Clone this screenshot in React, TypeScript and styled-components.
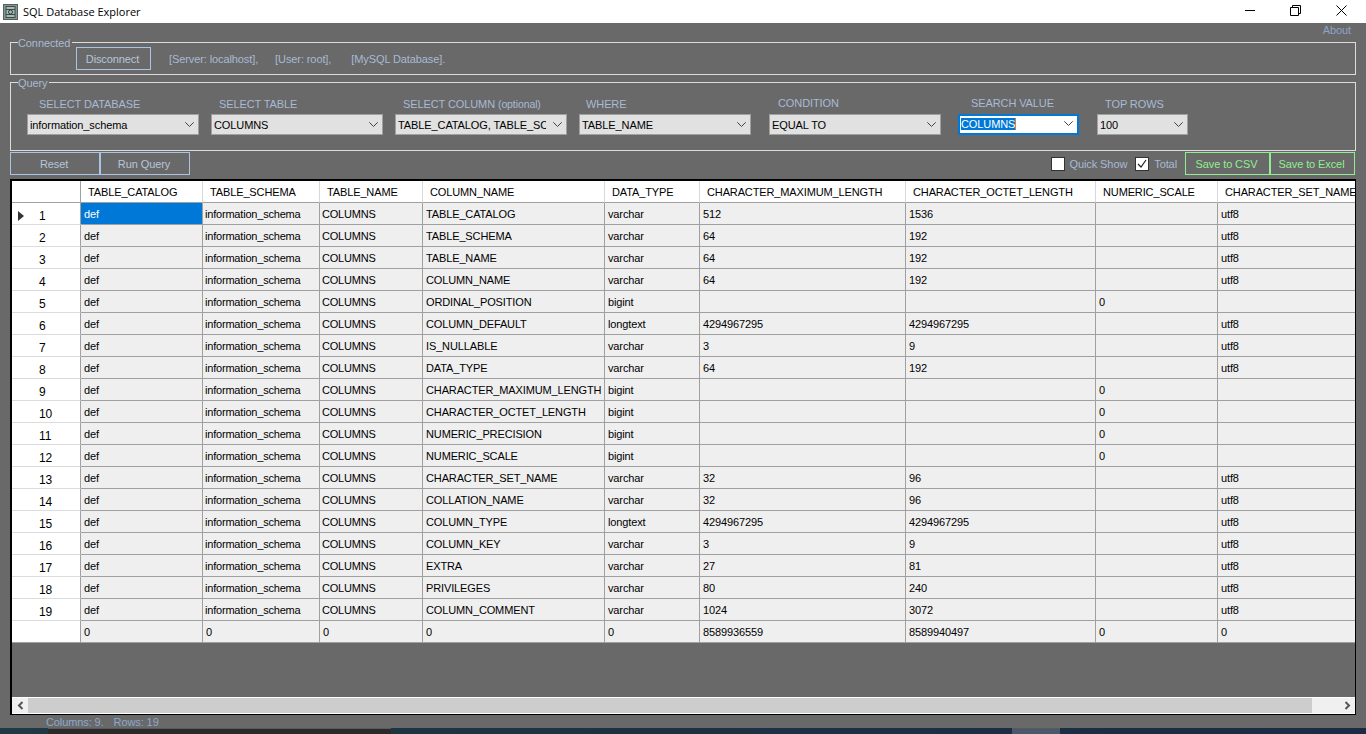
import React from 'react';
import styled, { createGlobalStyle } from 'styled-components';

const GlobalStyle = createGlobalStyle`
  html, body {
    margin: 0;
    padding: 0;
    background: #696969;
    overflow: hidden;
  }
  * {
    box-sizing: border-box;
  }
`;

const Page = styled.div`
  width: 1366px;
  height: 734px;
  display: flex;
  flex-direction: column;
  overflow: hidden;
  background: #696969;
  font-family: 'Liberation Sans', Arial, sans-serif;
  font-size: 11px;
  letter-spacing: -0.1px;
`;

const TitleBar = styled.div`
  height: 23px;
  flex: none;
  display: flex;
  align-items: center;
  background: #fff;
  padding-left: 3px;
  letter-spacing: 0;
`;

const TitleText = styled.span`
  margin-left: 5px;
  font-family: 'Open Sans', sans-serif;
  font-size: 11px;
  color: #000;
`;

const WindowControls = styled.div`
  margin-left: auto;
  margin-right: 2px;
  display: flex;
  align-items: center;
`;

const WindowButton = styled.div`
  width: 46px;
  height: 20px;
  display: flex;
  align-items: center;
  justify-content: center;
  margin-top: -3px;
`;

const AboutRow = styled.div`
  height: 19px;
  flex: none;
  display: flex;
  justify-content: flex-end;
  padding: 1px 15px 0 0;
`;

const AboutLink = styled.span`
  color: #8ea4c8;
`;

const GroupBox = styled.div<{ $height: number }>`
  position: relative;
  flex: none;
  height: ${p => p.$height}px;
  margin: 0 10px;
  border: 1px solid #dcdcdc;
`;

const GroupTitle = styled.span`
  position: absolute;
  top: -7px;
  left: 7px;
  padding: 0 2px 0 0;
  background: #696969;
  color: #a8bad4;
  line-height: 14px;
`;

const ConnectedRow = styled.div`
  display: flex;
  align-items: center;
  height: 23px;
  margin-top: 4px;
  padding-left: 65px;
  color: #a8bad4;
`;

const FlatButton = styled.div<{ $width: number; $green?: boolean }>`
  width: ${p => p.$width}px;
  height: 23px;
  flex: none;
  display: flex;
  align-items: center;
  justify-content: center;
  padding-right: 2px;
  border: 1px solid ${p => (p.$green ? '#90ee90' : '#a9c4e4')};
  color: ${p => (p.$green ? '#90ee90' : '#b5c6dc')};
`;

const InfoText = styled.span<{ $gap: number }>`
  margin-left: ${p => p.$gap}px;
`;

const GroupGap = styled.div`
  height: 7px;
  flex: none;
`;

const QueryRow = styled.div`
  display: flex;
  gap: 12px;
  padding: 14px 0 0 16px;
`;

const Field = styled.div<{ $width: number; $extra?: number }>`
  width: ${p => p.$width}px;
  flex: none;
  margin-left: ${p => p.$extra ?? 0}px;
`;

const FieldLabel = styled.div<{ $inset: number; $raised?: boolean }>`
  height: 17px;
  line-height: 14px;
  padding-left: ${p => p.$inset}px;
  margin-top: ${p => (p.$raised ? -1 : 0)}px;
  margin-bottom: ${p => (p.$raised ? 1 : 0)}px;
  color: #a8bad4;
  white-space: nowrap;
`;

const Optional = styled.span`
  font-size: 10.5px;
`;

const DropDown = styled.div<{ $focused?: boolean }>`
  height: 21px;
  display: flex;
  align-items: center;
  padding: 0 0 ${p => (p.$focused ? 2 : 0)}px ${p => (p.$focused ? 1 : 2)}px;
  background: ${p => (p.$focused ? '#fff' : '#e1e1e1')};
  border: ${p => (p.$focused ? '2px solid #0078d7' : '1px solid #a0a0a0')};
  color: #000;
`;

const DropDownValue = styled.span`
  flex: 1;
  min-width: 0;
  overflow: hidden;
  white-space: nowrap;
`;

const Selected = styled.span`
  background: #0078d7;
  color: #fff;
  border-right: 1px solid #e8801a;
`;

const Chevron = styled.svg`
  flex: none;
  width: 9px;
  height: 5px;
  margin: 0 4px 0 7px;
`;

const ActionRow = styled.div`
  height: 23px;
  flex: none;
  margin: 1px 11px 0 10px;
  display: flex;
  align-items: center;
`;

const CheckArea = styled.div`
  margin-left: auto;
  display: flex;
  align-items: center;
  margin-right: 8px;
  color: #a8bad4;
`;

const CheckBox = styled.div<{ $gap: number }>`
  width: 14px;
  height: 14px;
  margin-left: ${p => p.$gap}px;
  margin-right: 5px;
  background: #fff;
  border: 1px solid #333;
  display: flex;
  align-items: center;
  justify-content: center;
`;

const GridFrame = styled.div`
  flex: none;
  height: 536px;
  margin: 4px 10px 0;
  border: 2px solid #000;
  border-right-width: 1px;
  border-bottom-width: 1px;
  display: flex;
  flex-direction: column;
  background: #696969;
`;

const GridViewport = styled.div`
  flex: 1;
  min-height: 0;
  overflow: hidden;
`;

const Table = styled.table`
  width: 1366px;
  table-layout: fixed;
  border-collapse: separate;
  border-spacing: 0;
  color: #000;
  font-size: 11px;
  letter-spacing: -0.13px;
`;

const HeadCell = styled.th`
  height: 22px;
  padding: 0 0 0 7px;
  background: #fff;
  border-right: 1px solid #d8d8d8;
  border-bottom: 1px solid #a0a0a0;
  font-weight: 400;
  text-align: left;
  white-space: nowrap;
  overflow: hidden;
`;

const CornerCell = styled(HeadCell)`
  border-right-color: #a0a0a0;
`;

const RowHeadCell = styled.td<{ $last?: boolean }>`
  height: 22px;
  padding: 0;
  background: #fff;
  border-right: 1px solid #a0a0a0;
  border-bottom: 1px solid ${p => (p.$last ? '#a0a0a0' : '#dcdcdc')};
`;

const RowHeadInner = styled.div`
  display: flex;
  align-items: center;
  padding-top: 5px;
  font-size: 12px;
`;

const ArrowSlot = styled.div`
  width: 27px;
  flex: none;
  padding-left: 6px;
  display: flex;
`;

const DataCell = styled.td<{ $selected?: boolean }>`
  height: 22px;
  padding: 0 0 0 3px;
  background: ${p => (p.$selected ? '#0078d7' : '#efefef')};
  color: ${p => (p.$selected ? '#fff' : '#000')};
  border-right: 1px solid #a0a0a0;
  border-bottom: 1px solid #a0a0a0;
  white-space: nowrap;
  overflow: hidden;
`;

const TightCell = styled(DataCell)`
  padding-left: 2px;
  letter-spacing: -0.2px;
`;

const ScrollBar = styled.div`
  height: 17px;
  flex: none;
  display: flex;
  background: #f0f0f0;
  border-top: 1px solid #fff;
  border-bottom: 1px solid #fff;
`;

const ScrollButton = styled.div`
  width: 16px;
  flex: none;
  display: flex;
  align-items: center;
  justify-content: center;
`;

const ScrollThumb = styled.div`
  width: 1284px;
  flex: none;
  background: #cdcdcd;
`;

const EndButton = styled(ScrollButton)`
  margin-left: auto;
`;

const StatusBar = styled.div`
  height: 13px;
  flex: none;
  display: flex;
  padding: 1px 0 0 46px;
  color: #8fa7cc;
  line-height: 13px;
`;

const StatusItem = styled.span<{ $gap?: number }>`
  margin-left: ${p => p.$gap ?? 0}px;
`;

const Desktop = styled.div`
  height: 6px;
  flex: 1;
  display: flex;
  background: linear-gradient(90deg, #1f3a44 0%, #1c3342 40%, #1b2b44 100%);
`;

const DesktopPiece = styled.div<{ $width: number; $at: number; $color: string }>`
  width: ${p => p.$width}px;
  margin-left: ${p => p.$at}px;
  background: ${p => p.$color};
  border-top: 1px solid #5a5a5a;
`;

const columns = [
  { name: 'TABLE_CATALOG', width: 122 },
  { name: 'TABLE_SCHEMA', width: 117 },
  { name: 'TABLE_NAME', width: 103 },
  { name: 'COLUMN_NAME', width: 182 },
  { name: 'DATA_TYPE', width: 95 },
  { name: 'CHARACTER_MAXIMUM_LENGTH', width: 206 },
  { name: 'CHARACTER_OCTET_LENGTH', width: 190 },
  { name: 'NUMERIC_SCALE', width: 122 },
  { name: 'CHARACTER_SET_NAME', width: 160 },
];

// column name, type, max length, octet length, numeric scale, charset
const rows: string[][] = [
  ['TABLE_CATALOG', 'varchar', '512', '1536', '', 'utf8'],
  ['TABLE_SCHEMA', 'varchar', '64', '192', '', 'utf8'],
  ['TABLE_NAME', 'varchar', '64', '192', '', 'utf8'],
  ['COLUMN_NAME', 'varchar', '64', '192', '', 'utf8'],
  ['ORDINAL_POSITION', 'bigint', '', '', '0', ''],
  ['COLUMN_DEFAULT', 'longtext', '4294967295', '4294967295', '', 'utf8'],
  ['IS_NULLABLE', 'varchar', '3', '9', '', 'utf8'],
  ['DATA_TYPE', 'varchar', '64', '192', '', 'utf8'],
  ['CHARACTER_MAXIMUM_LENGTH', 'bigint', '', '', '0', ''],
  ['CHARACTER_OCTET_LENGTH', 'bigint', '', '', '0', ''],
  ['NUMERIC_PRECISION', 'bigint', '', '', '0', ''],
  ['NUMERIC_SCALE', 'bigint', '', '', '0', ''],
  ['CHARACTER_SET_NAME', 'varchar', '32', '96', '', 'utf8'],
  ['COLLATION_NAME', 'varchar', '32', '96', '', 'utf8'],
  ['COLUMN_TYPE', 'longtext', '4294967295', '4294967295', '', 'utf8'],
  ['COLUMN_KEY', 'varchar', '3', '9', '', 'utf8'],
  ['EXTRA', 'varchar', '27', '81', '', 'utf8'],
  ['PRIVILEGES', 'varchar', '80', '240', '', 'utf8'],
  ['COLUMN_COMMENT', 'varchar', '1024', '3072', '', 'utf8'],
];

const totals = ['0', '0', '0', '0', '0', '8589936559', '8589940497', '0', '0'];

const ChevronIcon = () => (
  <Chevron viewBox="0 0 9 5">
    <polyline points="0.3,0.3 4.5,4.5 8.7,0.3" fill="none" stroke="#444" strokeWidth="1" />
  </Chevron>
);

const AppIcon = () => (
  <svg width="15" height="16" viewBox="0 0 15 16">
    <rect x="0.5" y="0.5" width="14" height="15" fill="#7f9a94" stroke="#56615e" />
    <rect x="3" y="2.5" width="9" height="11" fill="#a7bcb6" stroke="#3f4a48" />
    <path d="M3 5.5h9M3 10.5h9" stroke="#3f4a48" />
    <circle cx="7.5" cy="8" r="2" fill="none" stroke="#2f3a38" />
  </svg>
);

export default function App() {
  return (
    <Page>
      <GlobalStyle />
      <TitleBar>
        <AppIcon />
        <TitleText>SQL Database Explorer</TitleText>
        <WindowControls>
          <WindowButton>
            <svg width="11" height="11" viewBox="0 0 11 11">
              <path d="M1 5.5h10" stroke="#000" />
            </svg>
          </WindowButton>
          <WindowButton>
            <svg width="11" height="11" viewBox="0 0 11 11">
              <path d="M2.5 2.5v-2h8v8h-2M0.5 2.5h8v8h-8z" fill="none" stroke="#000" />
            </svg>
          </WindowButton>
          <WindowButton>
            <svg width="11" height="11" viewBox="0 0 11 11">
              <path d="M0.5 0.5l10 10M10.5 0.5l-10 10" stroke="#000" />
            </svg>
          </WindowButton>
        </WindowControls>
      </TitleBar>

      <AboutRow>
        <AboutLink>About</AboutLink>
      </AboutRow>

      <GroupBox $height={33}>
        <GroupTitle>Connected</GroupTitle>
        <ConnectedRow>
          <FlatButton $width={75}>Disconnect</FlatButton>
          <InfoText $gap={18}>[Server: localhost],</InfoText>
          <InfoText $gap={17}>[User: root],</InfoText>
          <InfoText $gap={20}>[MySQL Database].</InfoText>
        </ConnectedRow>
      </GroupBox>

      <GroupGap />

      <GroupBox $height={69}>
        <GroupTitle>Query</GroupTitle>
        <QueryRow>
          <Field $width={172}>
            <FieldLabel $inset={12}>SELECT DATABASE</FieldLabel>
            <DropDown>
              <DropDownValue>information_schema</DropDownValue>
              <ChevronIcon />
            </DropDown>
          </Field>
          <Field $width={172}>
            <FieldLabel $inset={8}>SELECT TABLE</FieldLabel>
            <DropDown>
              <DropDownValue>COLUMNS</DropDownValue>
              <ChevronIcon />
            </DropDown>
          </Field>
          <Field $width={172}>
            <FieldLabel $inset={8}>
              SELECT COLUMN <Optional>(optional)</Optional>
            </FieldLabel>
            <DropDown>
              <DropDownValue>TABLE_CATALOG, TABLE_SC</DropDownValue>
              <ChevronIcon />
            </DropDown>
          </Field>
          <Field $width={172}>
            <FieldLabel $inset={7}>WHERE</FieldLabel>
            <DropDown>
              <DropDownValue>TABLE_NAME</DropDownValue>
              <ChevronIcon />
            </DropDown>
          </Field>
          <Field $width={172} $extra={6}>
            <FieldLabel $inset={9} $raised>
              CONDITION
            </FieldLabel>
            <DropDown>
              <DropDownValue>EQUAL TO</DropDownValue>
              <ChevronIcon />
            </DropDown>
          </Field>
          <Field $width={121} $extra={5}>
            <FieldLabel $inset={13} $raised>
              SEARCH VALUE
            </FieldLabel>
            <DropDown $focused>
              <DropDownValue>
                <Selected>COLUMNS</Selected>
              </DropDownValue>
              <ChevronIcon />
            </DropDown>
          </Field>
          <Field $width={91} $extra={6}>
            <FieldLabel $inset={8}>TOP ROWS</FieldLabel>
            <DropDown>
              <DropDownValue>100</DropDownValue>
              <ChevronIcon />
            </DropDown>
          </Field>
        </QueryRow>
      </GroupBox>

      <ActionRow>
        <FlatButton $width={90}>Reset</FlatButton>
        <FlatButton $width={90}>Run Query</FlatButton>
        <CheckArea>
          <CheckBox $gap={0} />
          Quick Show
          <CheckBox $gap={8}>
            <svg width="10" height="10" viewBox="0 0 10 10">
              <path d="M1 5l3 3 5-7" fill="none" stroke="#222" strokeWidth="1.2" />
            </svg>
          </CheckBox>
          Total
        </CheckArea>
        <FlatButton $width={85} $green>
          Save to CSV
        </FlatButton>
        <FlatButton $width={85} $green>
          Save to Excel
        </FlatButton>
      </ActionRow>

      <GridFrame>
        <GridViewport>
          <Table>
            <colgroup>
              <col style={{ width: 69 }} />
              {columns.map(c => (
                <col key={c.name} style={{ width: c.width }} />
              ))}
            </colgroup>
            <thead>
              <tr>
                <CornerCell />
                {columns.map(c => (
                  <HeadCell key={c.name}>{c.name}</HeadCell>
                ))}
              </tr>
            </thead>
            <tbody>
              {rows.map((row, i) => (
                <tr key={row[0]}>
                  <RowHeadCell>
                    <RowHeadInner>
                      <ArrowSlot>
                        {i === 0 && (
                          <svg width="6" height="10" viewBox="0 0 6 10">
                            <path d="M0 0l6 5-6 5z" fill="#333" />
                          </svg>
                        )}
                      </ArrowSlot>
                      {i + 1}
                    </RowHeadInner>
                  </RowHeadCell>
                  <DataCell $selected={i === 0}>def</DataCell>
                  <TightCell>information_schema</TightCell>
                  <TightCell>COLUMNS</TightCell>
                  {row.map((value, j) => (
                    <DataCell key={j}>{value}</DataCell>
                  ))}
                </tr>
              ))}
              <tr>
                <RowHeadCell $last />
                {totals.map((value, j) => (
                  <DataCell key={j}>{value}</DataCell>
                ))}
              </tr>
            </tbody>
          </Table>
        </GridViewport>
        <ScrollBar>
          <ScrollButton>
            <svg width="7" height="9" viewBox="0 0 7 9">
              <path d="M5.5 1l-3.5 3.5 3.5 3.5" fill="none" stroke="#555" strokeWidth="2" />
            </svg>
          </ScrollButton>
          <ScrollThumb />
          <EndButton>
            <svg width="7" height="9" viewBox="0 0 7 9">
              <path d="M1.5 1l3.5 3.5-3.5 3.5" fill="none" stroke="#555" strokeWidth="2" />
            </svg>
          </EndButton>
        </ScrollBar>
      </GridFrame>

      <StatusBar>
        <StatusItem>Columns: 9.</StatusItem>
        <StatusItem $gap={10}>Rows: 19</StatusItem>
      </StatusBar>

      <Desktop>
        <DesktopPiece $width={343} $at={48} $color="#2a2a2a" />
        <DesktopPiece $width={48} $at={621} $color="#4a5a6c" />
      </Desktop>
    </Page>
  );
}
